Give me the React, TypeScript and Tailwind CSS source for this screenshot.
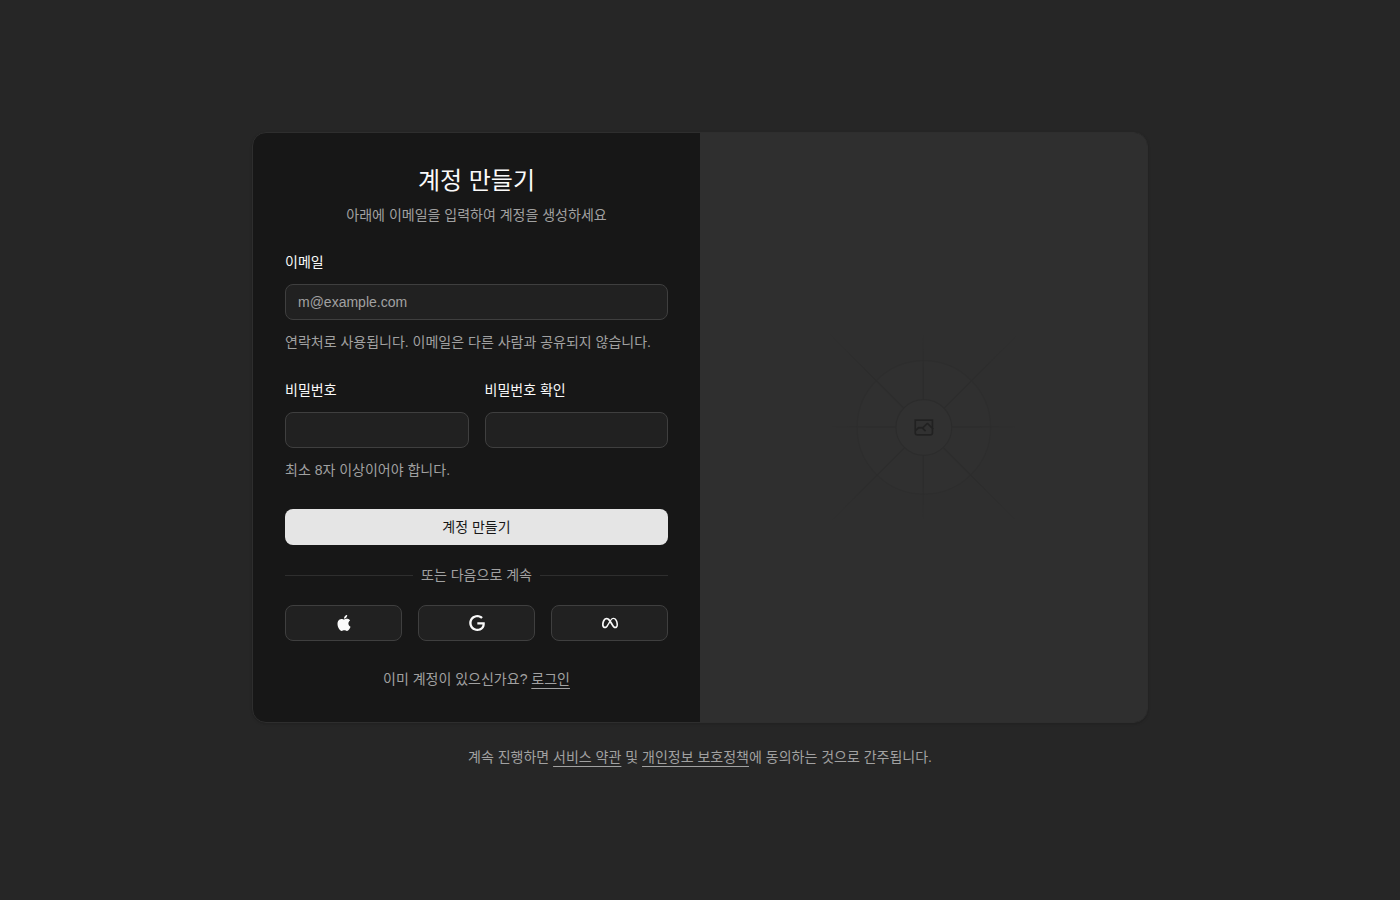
import type { ComponentProps, ReactNode } from "react";
import { SiApple, SiGoogle, SiMeta } from "react-icons/si";

const providers = [
  { name: "Apple", Icon: SiApple },
  { name: "Google", Icon: SiGoogle },
  { name: "Meta", Icon: SiMeta },
];

function Input(props: ComponentProps<"input">) {
  return (
    <input
      className="h-9 w-full min-w-0 rounded-lg border border-[#3f3f3f] bg-[#212121] px-3 text-sm text-[#fafafa] outline-none placeholder:text-[#a1a1a1] focus-visible:border-[#737373]"
      {...props}
    />
  );
}

function FieldLabel({ htmlFor, children }: { htmlFor: string; children: ReactNode }) {
  return (
    <label htmlFor={htmlFor} className="text-sm leading-[19px]">
      {children}
    </label>
  );
}

function FieldDescription({ children }: { children: ReactNode }) {
  return <p className="text-sm leading-[21px] text-[#a1a1a1]">{children}</p>;
}

function TextLink({ children }: { children: ReactNode }) {
  return (
    <a href="#" className="underline underline-offset-4">
      {children}
    </a>
  );
}

function GradientStops() {
  return (
    <>
      <stop stopColor="#C9C9C9" stopOpacity="0" />
      <stop offset=".208" stopColor="#C9C9C9" />
      <stop offset=".792" stopColor="#C9C9C9" />
      <stop offset="1" stopColor="#C9C9C9" stopOpacity="0" />
    </>
  );
}

function Placeholder() {
  return (
    <svg
      viewBox="0 0 1200 1200"
      fill="none"
      preserveAspectRatio="xMidYMid slice"
      className="absolute inset-0 h-full w-full brightness-[0.2] grayscale"
      aria-hidden="true"
    >
      <rect width="1200" height="1200" fill="#EAEAEA" />
      <g opacity=".5">
        <circle cx="600.709" cy="599.88" r="136.62" fill="#FAFAFA" opacity=".5" />
        <circle cx="600.709" cy="599.88" r="136" stroke="#C9C9C9" strokeWidth="2.418" opacity=".7" />
        <path
          stroke="url(#ray-a)"
          strokeWidth="2.418"
          d="M0-1.209h553.581"
          transform="scale(1 -1) rotate(45 1163.11 91.165)"
        />
        <path stroke="url(#ray-b)" strokeWidth="2.418" d="M404.846 598.671h391.726" />
        <path stroke="url(#ray-c)" strokeWidth="2.418" d="M599.5 795.742V404.017" />
        <path stroke="url(#ray-d)" strokeWidth="2.418" d="m795.717 796.597-391.441-391.44" />
        <circle cx="600.709" cy="599.88" r="56.825" fill="#fff" />
        <path
          fill="#666"
          fillRule="evenodd"
          clipRule="evenodd"
          d="M616.426 586.58h-31.434v16.176l3.553-3.554.531-.531h9.068l.074-.074 8.463-8.463h2.565l7.18 7.181V586.58Zm-15.715 14.654 3.698 3.699 1.283 1.282-2.565 2.565-1.282-1.283-5.2-5.199h-6.066l-5.514 5.514-.073.073v2.876a2.418 2.418 0 0 0 2.418 2.418h26.598a2.418 2.418 0 0 0 2.418-2.418v-8.317l-8.463-8.463-7.181 7.181-.071.072Zm-19.347 5.442v4.085a6.045 6.045 0 0 0 6.046 6.045h26.598a6.044 6.044 0 0 0 6.045-6.045v-7.108l1.356-1.355-1.282-1.283-.074-.073v-17.989h-38.689v23.43l-.146.146.146.147Z"
        />
        <circle cx="600.709" cy="599.88" r="56.825" stroke="#C9C9C9" strokeWidth="2.418" />
      </g>
      <defs>
        <linearGradient id="ray-a" x1="554.061" x2="-.48" y1=".083" y2=".087" gradientUnits="userSpaceOnUse">
          <GradientStops />
        </linearGradient>
        <linearGradient id="ray-b" x1="796.912" x2="404.507" y1="599.963" y2="599.965" gradientUnits="userSpaceOnUse">
          <GradientStops />
        </linearGradient>
        <linearGradient id="ray-c" x1="600.792" x2="600.794" y1="403.677" y2="796.082" gradientUnits="userSpaceOnUse">
          <GradientStops />
        </linearGradient>
        <linearGradient id="ray-d" x1="404.85" x2="796.972" y1="403.903" y2="796.02" gradientUnits="userSpaceOnUse">
          <GradientStops />
        </linearGradient>
      </defs>
    </svg>
  );
}

function SignupForm() {
  return (
    <form className="flex flex-col gap-7 p-8" onSubmit={(e) => e.preventDefault()}>
      <div className="flex flex-col items-center gap-2 text-center">
        <h1 className="text-2xl">계정 만들기</h1>
        <p className="text-sm text-[#a1a1a1]">아래에 이메일을 입력하여 계정을 생성하세요</p>
      </div>

      <div className="flex flex-col gap-3">
        <FieldLabel htmlFor="email">이메일</FieldLabel>
        <Input id="email" type="email" placeholder="m@example.com" required />
        <FieldDescription>
          연락처로 사용됩니다. 이메일은 다른 사람과 공유되지 않습니다.
        </FieldDescription>
      </div>

      <div className="flex flex-col gap-3">
        <div className="grid grid-cols-2 gap-4">
          <div className="flex flex-col gap-3">
            <FieldLabel htmlFor="password">비밀번호</FieldLabel>
            <Input id="password" type="password" required />
          </div>
          <div className="flex flex-col gap-3">
            <FieldLabel htmlFor="confirm-password">비밀번호 확인</FieldLabel>
            <Input id="confirm-password" type="password" required />
          </div>
        </div>
        <FieldDescription>최소 8자 이상이어야 합니다.</FieldDescription>
      </div>

      <button type="submit" className="h-9 rounded-lg bg-[#e5e5e5] text-sm text-[#171717] hover:bg-[#d4d4d4]">
        계정 만들기
      </button>

      <div className="-my-2 flex items-center gap-2 text-sm text-[#a1a1a1]">
        <span className="h-px flex-1 bg-[#2e2e2e]" />
        또는 다음으로 계속
        <span className="h-px flex-1 bg-[#2e2e2e]" />
      </div>

      <div className="grid grid-cols-3 gap-4">
        {providers.map(({ name, Icon }) => (
          <button
            key={name}
            type="button"
            aria-label={name}
            className="flex h-9 items-center justify-center rounded-lg border border-[#3f3f3f] bg-[#212121] hover:bg-[#2e2e2e]"
          >
            <Icon className="size-4" />
          </button>
        ))}
      </div>

      <div className="text-center">
        <FieldDescription>
          이미 계정이 있으신가요? <TextLink>로그인</TextLink>
        </FieldDescription>
      </div>
    </form>
  );
}

export default function App() {
  return (
    <main
      lang="ko"
      className="flex min-h-svh flex-col items-center justify-center bg-[#262626] p-6 font-['Liberation_Sans','Noto_Sans_CJK_KR',sans-serif] text-[#fafafa] md:p-10"
    >
      <div className="flex w-full max-w-sm flex-col gap-6 md:max-w-4xl">
        <div className="overflow-hidden rounded-[14px] border border-[#2e2e2e] bg-[#171717] shadow-sm">
          <div className="grid md:grid-cols-2">
            <SignupForm />
            <div className="relative hidden bg-[#262626] md:block">
              <Placeholder />
            </div>
          </div>
        </div>

        <div className="px-6 text-center">
          <FieldDescription>
            계속 진행하면 <TextLink>서비스 약관</TextLink> 및{" "}
            <TextLink>개인정보 보호정책</TextLink>에 동의하는 것으로 간주됩니다.
          </FieldDescription>
        </div>
      </div>
    </main>
  );
}
